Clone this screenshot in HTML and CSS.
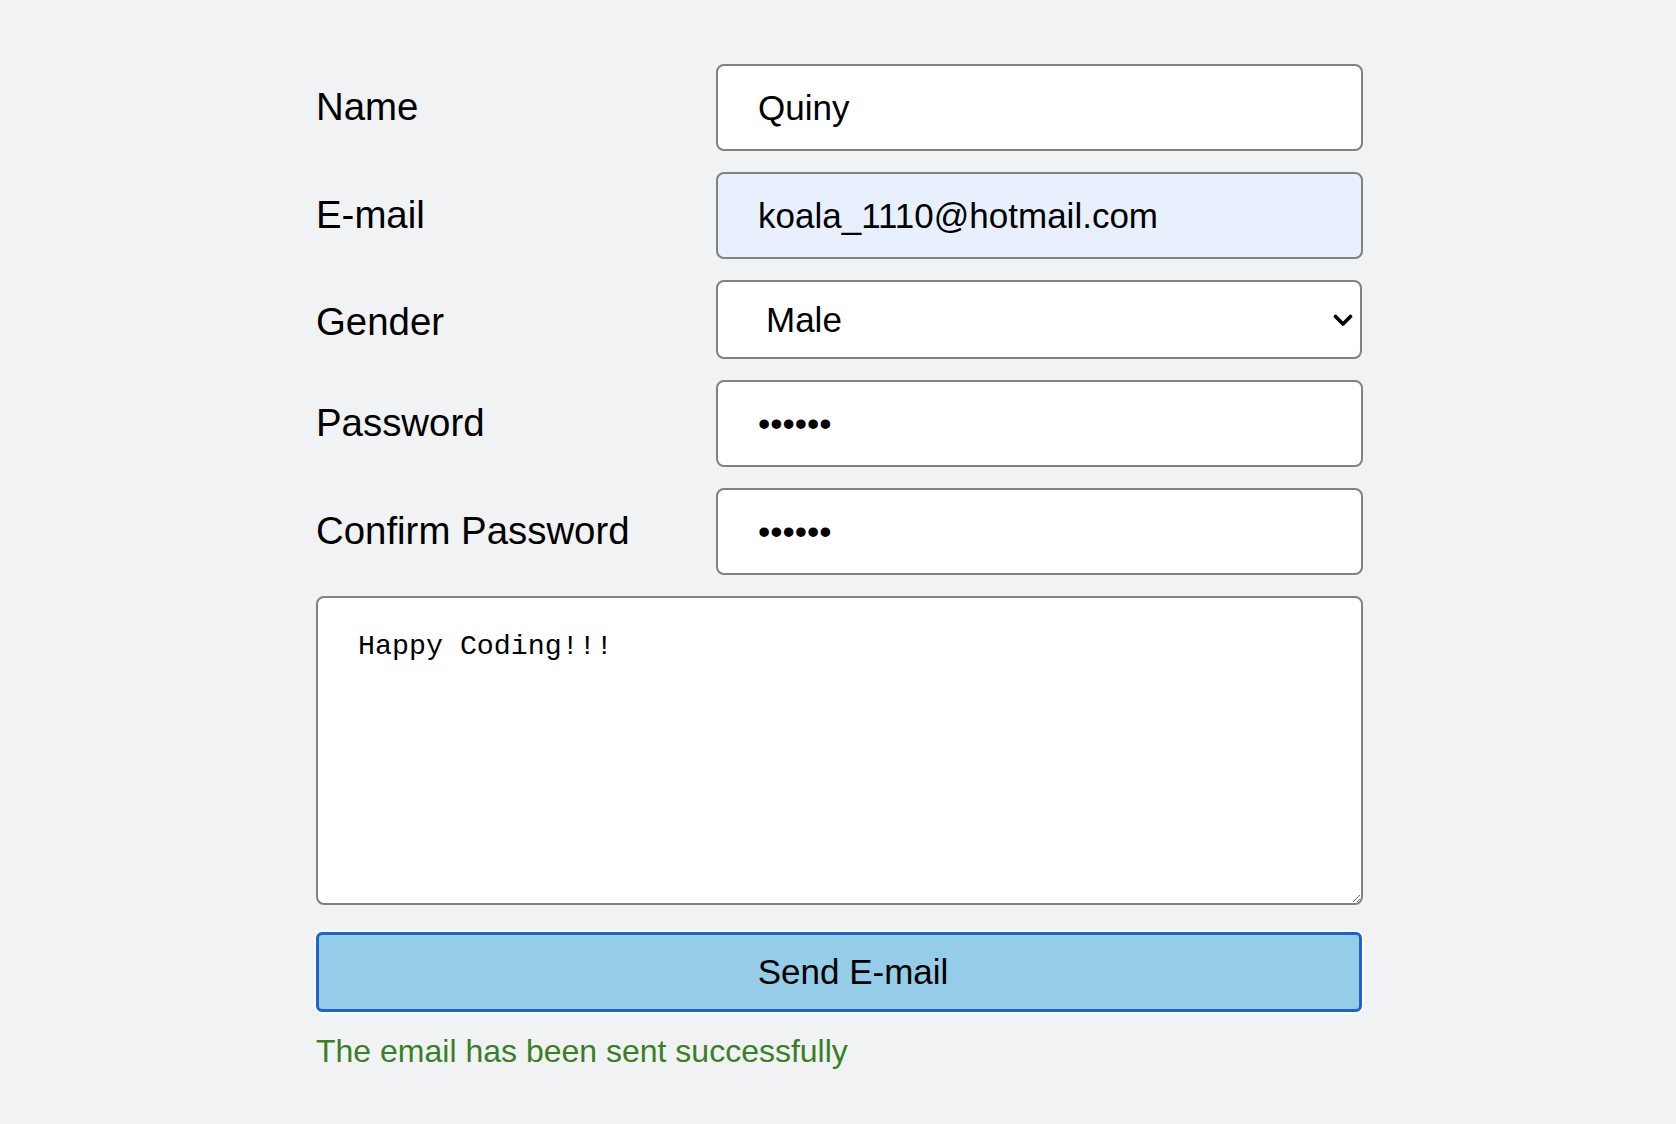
FILE: index.html
```html
<!DOCTYPE html>
<html lang="en">
<head>
<meta charset="utf-8">
<title>Send E-mail</title>
<link rel="stylesheet" href="styles.css">
</head>
<body>
<form class="form" onsubmit="return false;">
  <div class="grid">
    <label class="label" for="name">Name</label>
    <input class="field" id="name" type="text" value="Quiny">

    <label class="label" for="email">E-mail</label>
    <input class="field field-autofill" id="email" type="email" value="koala_1110@hotmail.com">

    <label class="label label-gender" for="gender">Gender</label>
    <div class="select-wrap">
      <select class="select" id="gender">
        <option selected>Male</option>
        <option>Female</option>
      </select>
      <svg class="chevron" width="20" height="14" viewBox="0 0 20 14" aria-hidden="true">
        <path d="M2.5 2.5 L10 10 L17.5 2.5" fill="none" stroke="#000" stroke-width="3.6" stroke-linecap="round" stroke-linejoin="round"/>
      </svg>
    </div>

    <label class="label" for="password">Password</label>
    <input class="field" id="password" type="password" value="123456">

    <label class="label" for="confirm">Confirm Password</label>
    <input class="field" id="confirm" type="password" value="123456">

    <textarea class="message" id="message">Happy Coding!!!</textarea>
  </div>

  <button class="send" type="submit">Send E-mail</button>
  <p class="status">The email has been sent successfully</p>
</form>
</body>
</html>
```

FILE: styles.css
```css
html, body {
  margin: 0;
  padding: 0;
  background: #f1f2f4;
}

body {
  font-family: "Liberation Sans", Arial, Helvetica, sans-serif;
  color: #000;
}

.form {
  width: 1047px;
  margin: 0 0 0 316px;
  padding-top: 64px;
}

.grid {
  display: grid;
  grid-template-columns: 400px 647px;
  row-gap: 21px;
  align-items: center;
}

.label {
  font-size: 38.4px;
  line-height: 1;
  color: #000;
}

.label-gender {
  padding-top: 6px;
}

.field {
  box-sizing: border-box;
  width: 647px;
  height: 87px;
  margin: 0;
  padding: 0 40px;
  border: 2px solid #818181;
  border-radius: 8px;
  background: #fff;
  font-family: "Liberation Sans", Arial, sans-serif;
  font-size: 35px;
  color: #000;
  outline: none;
}

.field-autofill {
  background: #e8f0fe;
}

.select-wrap {
  position: relative;
  width: 646px;
  height: 79px;
}

.select {
  -webkit-appearance: none;
  appearance: none;
  box-sizing: border-box;
  width: 646px;
  height: 79px;
  margin: 0;
  padding: 0 40px 0 48px;
  border: 2px solid #818181;
  border-radius: 8px;
  background: #fff;
  font-family: "Liberation Sans", Arial, sans-serif;
  font-size: 35px;
  color: #000;
  outline: none;
}

.chevron {
  position: absolute;
  right: 9px;
  top: 34px;
  pointer-events: none;
}

.message {
  grid-column: 1 / 3;
  box-sizing: border-box;
  width: 1047px;
  height: 309px;
  margin: 0;
  padding: 32px 40px;
  border: 2px solid #818181;
  border-radius: 8px;
  background: #fff;
  font-family: "Liberation Mono", "Courier New", monospace;
  font-size: 28.3px;
  line-height: 1.2;
  color: #000;
  outline: none;
  resize: vertical;
}

.send {
  display: block;
  box-sizing: border-box;
  width: 1046px;
  height: 80px;
  margin: 27px 0 0 0;
  padding: 0 0 0 28px;
  border: 3px solid #2062cb;
  border-radius: 6px;
  background: #95cce8;
  box-shadow: 0 0 0 1.5px #fff;
  font-family: "Liberation Sans", Arial, sans-serif;
  font-size: 35px;
  color: #000;
  cursor: pointer;
}

.status {
  margin: 20px 0 0 0;
  font-size: 32px;
  line-height: 1.2;
  color: #3a7f25;
}
```
